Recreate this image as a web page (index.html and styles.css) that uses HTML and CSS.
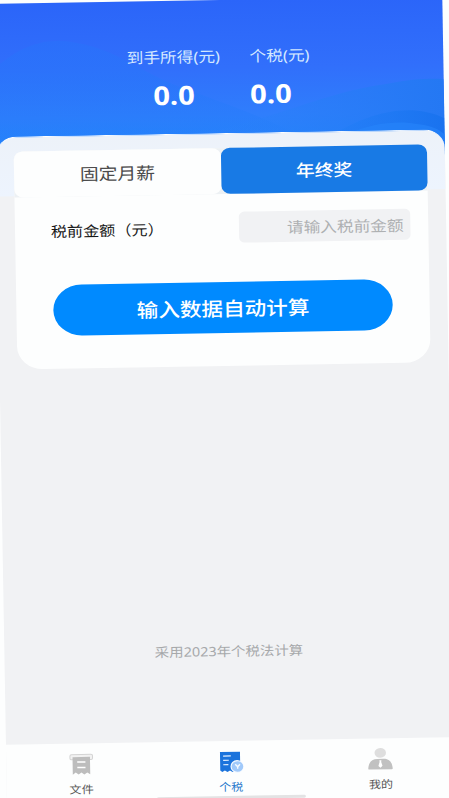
FILE: index.html
```html
<!DOCTYPE html>
<html lang="zh-CN">
<head>
<meta charset="utf-8">
<title>个税</title>
<link rel="stylesheet" href="styles.css">
</head>
<body>
<div class="app">
  <header class="header">
    <svg class="waves" viewBox="0 0 449 160" preserveAspectRatio="none" aria-hidden="true">
      <defs>
        <linearGradient id="right-wave" x1="0" y1="0" x2="1" y2="0"><stop offset="0" stop-color="#2b83fb" stop-opacity=".1"/><stop offset="1" stop-color="#2478f3"/></linearGradient>
        <linearGradient id="dark-wave" x1="0" y1="0" x2="1" y2="0"><stop offset="0" stop-color="#2180f8" stop-opacity=".3"/><stop offset="1" stop-color="#1671ee" stop-opacity=".8"/></linearGradient>
        <linearGradient id="left-wave" x1="0" y1="0" x2="0" y2="1"><stop offset="0" stop-color="#2872fa" stop-opacity=".55"/><stop offset="1" stop-color="#2381fa" stop-opacity=".3"/></linearGradient>
      </defs>
      <path d="M0 65C25 44 43 38 65 38C118 42 143 70 185 86C215 98 255 112 290 130L290 160H0Z" fill="url(#left-wave)"/>
      <path d="M190 136C280 121 325 95 390 87C420 82 436 82 449 83V160H190Z" fill="url(#right-wave)"/>
      <path d="M337 137C370 117 413 104 449 122V160H320Z" fill="url(#dark-wave)"/>
      <path d="M349 138C375 125 402 124 420 127C435 129 442 132 449 138V160H340Z" fill="#2784fa" opacity=".65"/>
    </svg>
    <div class="totals">
      <div class="total net"><span class="caption">到手所得(元)</span><strong>0.0</strong></div>
      <div class="total"><span class="caption">个税(元)</span><strong>0.0</strong></div>
    </div>
    <div class="shell"></div>
  </header>
  <main class="card">
    <div class="tabs"><div class="tab">固定月薪</div><div class="tab active">年终奖</div></div>
    <div class="row"><span class="label">税前金额（元）</span><div class="field">请输入税前金额</div></div>
    <div class="button">输入数据自动计算</div>
  </main>
  <p class="note">采用2023年个税法计算</p>
  <nav class="nav">
    <div class="item">
      <svg class="icon" viewBox="0 0 24 24" preserveAspectRatio="none"><rect x="1" y="2" width="22" height="5.2" rx="1.5" fill="#f2f2f2" stroke="#d4d4d4" stroke-width="1"/><path d="M3.5 4.5H20.5V22L17.6 20L14.8 22L12 20L9.2 22L6.4 20L3.5 22Z" fill="#bdbdbd"/><path d="M8 9.5H16M8 15H16" stroke="#fff" stroke-width="1.5"/></svg>
      <span>文件</span>
    </div>
    <div class="item current">
      <svg class="icon" viewBox="0 0 24 24" preserveAspectRatio="none"><path d="M1 2H20.5V21L18 22L15.5 20.5L13 22L10.5 20.5L8 22L5.5 20.5L3 22L1 20.5Z" fill="#1b73dc"/><path d="M4 6H11.5M4 10.3H9.5M4 14.7H9" stroke="#e5f1ff" stroke-width="1.2"/><ellipse cx="17.5" cy="16.7" rx="6.5" ry="6.4" fill="#f4f9ff"/><ellipse cx="17.8" cy="16.7" rx="5.7" ry="5.3" fill="#a0c9fa"/><path d="M15.7 14.5L18 17L20.3 14.5M18 17V19" fill="none" stroke="#f4faff" stroke-width="1.4"/></svg>
      <span>个税</span>
    </div>
    <div class="item">
      <svg class="icon" viewBox="0 0 24 24" preserveAspectRatio="none"><path d="M0.8 22C-.5 22 0 20.5 .3 19C1.5 13.5 4.5 11.5 9 11.5H15C19.5 11.5 22.5 13.5 23.7 19C24 20.5 24.5 22 23.2 22Z" fill="#c1c1c1"/><ellipse cx="12" cy="5.5" rx="5.6" ry="4.9" fill="#dedede"/><path d="M11 13H13L12.8 14.7L14 18.5L12 20.5L10 18.5L11.2 14.7Z" fill="#fff"/></svg>
      <span>我的</span>
    </div>
    <div class="home-bar"></div>
  </nav>
</div>
</body>
</html>
```
FILE: styles.css
```css
* { box-sizing: border-box; }
html { background: #fdfefe; overflow: hidden; }
body {
  margin: 0;
  height: 798px;
  overflow: hidden;
  font-family: "Noto Sans", "Noto Sans CJK SC", sans-serif;
}
/* The screen is slightly tilted and widened */
.app {
  width: 401px;
  height: 812px;
  display: flex;
  flex-direction: column;
  background: #f1f2f4;
  transform-origin: 0 0;
  transform: translate(-6.8px, 3.9px) rotate(-0.987deg) scaleX(1.12);
  white-space: nowrap;
}
.header {
  position: relative;
  flex: none;
  height: 193px;
  display: flex;
  flex-direction: column;
  background: linear-gradient(#2b65f9 0, #316ffb 42%, #2f7efc 72%, #2583fb 86%, #2583fb 100%) 0 0 / 100% 160px no-repeat;
}
.waves { position: absolute; inset: 0; width: 100%; height: 160px; }
.totals {
  position: relative;
  height: 133px;
  display: flex;
  padding: 44px 0 0 118px;
  gap: 26px;
  color: #fff;
}
.total { display: flex; flex-direction: column; gap: 14px; }
.net { align-items: center; width: 84px; }
.caption { font-size: 14.9px; line-height: 24px; color: #d4e8ff; }
.total strong { font-size: 26px; line-height: 24px; }
.shell {
  position: relative;
  flex: 1;
  border-top: 1.5px solid #fff;
  border-radius: 19px 19px 0 0;
  background: linear-gradient(#edf2f9, #edf4fe);
}
.card {
  position: relative;
  flex: none;
  width: 369px;
  height: 218px;
  margin: -45px 0 0 16px;
  background: #fdfefe;
  border-radius: 8px 8px 23px 23px;
}
.tabs { display: flex; height: 46px; background: #edf1f4; border-radius: 8px 8px 0 0; }
.tab {
  flex: 1;
  border-radius: 8px;
  background: #fdfefe;
  color: #4b4b4b;
  font-size: 16.8px;
  line-height: 48px;
  text-align: center;
}
.tab.active { background: #187ae5; color: #fff; font-weight: 500; }
.row { display: flex; justify-content: space-between; align-items: center; padding: 18px 16px 0 32px; }
.label { font-size: 14.4px; color: #171717; }
.field {
  width: 153px;
  height: 31px;
  padding-right: 6px;
  border-radius: 5px;
  background: #f1f2f4;
  color: #aeb0b2;
  font-size: 14.9px;
  line-height: 32px;
  text-align: right;
}
.button {
  width: 303px;
  height: 51px;
  margin: 39px 0 0 33px;
  border-radius: 26px;
  background: #008aff;
  color: #fff;
  font-size: 19.3px;
  font-weight: 500;
  line-height: 53px;
  text-align: center;
}
.note { margin: 275px 0 0; color: #a7a9ab; font-size: 12.9px; line-height: 20px; height: 20px; text-align: center; }
.nav {
  position: relative;
  flex: none;
  height: 71px;
  margin-top: 80px;
  display: flex;
  background: #fdfefe;
}
.item {
  flex: 1;
  display: flex;
  flex-direction: column;
  align-items: center;
  padding-top: 8.5px;
  font-size: 10.8px;
  line-height: 16px;
  color: #555;
}
.item span { margin-top: 5px; }
.icon { width: 22px; height: 24px; }
.current { color: #2879cc; }
.home-bar { position: absolute; left: 134px; top: 54.5px; width: 133px; height: 3px; border-radius: 2px; background: #e3e3e4; }
```
